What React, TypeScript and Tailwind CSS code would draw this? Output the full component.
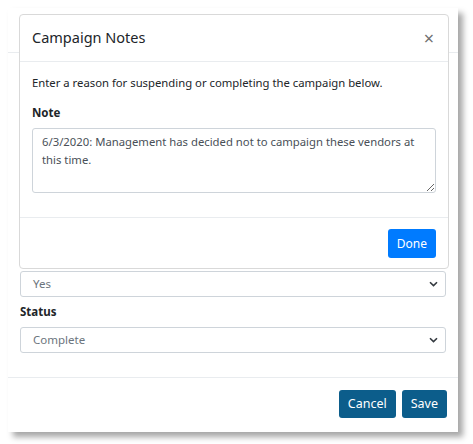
import type { ReactNode } from "react";

function Chevron() {
  return (
    <svg width="9" height="6" viewBox="0 0 9 6" className="text-[#343a40]" aria-hidden>
      <path d="M1 1.2 4.5 4.6 8 1.2" fill="none" stroke="currentColor" strokeWidth="1.6" />
    </svg>
  );
}

function SelectBox({ value }: { value: string }) {
  return (
    <div className="flex h-[26px] items-center justify-between rounded-[3px] border border-[#ced4da] bg-white pl-[12px] pr-[7px] text-[11.5px] text-[#6c757d]">
      <span>{value}</span>
      <Chevron />
    </div>
  );
}

function Label({ children }: { children: ReactNode }) {
  return <div className="text-[11.5px] font-bold leading-[18px] text-[#212529]">{children}</div>;
}

export default function App() {
  return (
    <div
      className="relative h-[444px] w-[473px] overflow-hidden bg-white p-2"
      style={{ fontFamily: '"Noto Sans", "Open Sans", sans-serif' }}
    >
      <div className="flex h-[424px] w-[450px] flex-col bg-white shadow-[5px_5px_6px_rgba(0,0,0,0.35)]">
        <div className="h-[45px] border-b border-[#e9ecef]" />
        <div className="flex flex-1 flex-col justify-end px-3 pb-[24px]">
          <SelectBox value="Yes" />
          <div className="mt-[6px] mb-[6px]">
            <Label>Status</Label>
          </div>
          <SelectBox value="Complete" />
        </div>
        <div className="flex h-[55px] items-start justify-end gap-[6px] border-t border-[#e9ecef] px-[11px] pt-[12px]">
          <button className="h-[28px] rounded-[3px] bg-[#0c5d8b] px-[9px] text-[12.5px] text-white">Cancel</button>
          <button className="h-[28px] rounded-[3px] bg-[#0c5d8b] px-[9px] text-[12.5px] text-white">Save</button>
        </div>
      </div>

      <div className="absolute left-[19px] top-[14px] flex h-[255px] w-[430px] flex-col rounded-[4px] border border-[#d9d9d9] bg-white">
        <div className="flex h-[47px] items-center justify-between border-b border-[#e9ecef] px-3">
          <span className="text-[14.5px] text-[#212529]">Campaign Notes</span>
          <span className="pr-[2px] text-[18px] leading-none text-[#6f6f6f]">×</span>
        </div>
        <div className="px-3 pt-3 pb-3 text-[11.3px] leading-[18px] text-[#212529]">
          <p className="mb-3">Enter a reason for suspending or completing the campaign below.</p>
          <Label>Note</Label>
          <textarea
            readOnly
            rows={3}
            className="mt-[6px] mb-3 block h-[65px] w-full rounded-[3px] border border-[#ced4da] px-[9px] py-[4px] text-[11.3px] leading-[18px] text-[#495057] outline-none"
            defaultValue="6/3/2020: Management has decided not to campaign these vendors at this time."
          />
        </div>
        <div className="flex flex-1 items-start justify-end border-t border-[#e9ecef] px-3 pt-[11px]">
          <button className="h-[29px] rounded-[3px] bg-[#007bff] px-[9px] text-[12px] text-white">Done</button>
        </div>
      </div>
    </div>
  );
}
